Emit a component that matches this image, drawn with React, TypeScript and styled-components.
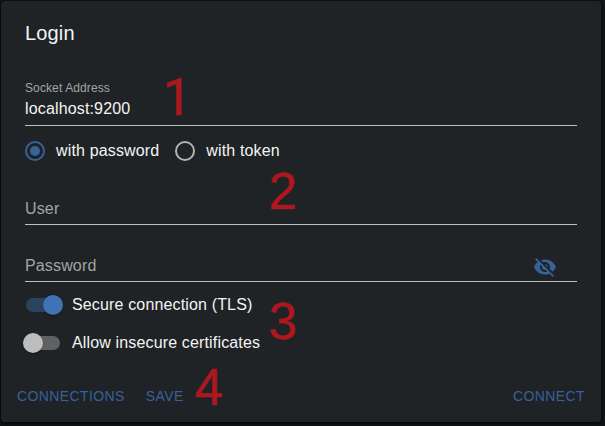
import React from "react";
import styled, { createGlobalStyle } from "styled-components";

const GlobalStyle = createGlobalStyle`
  *, *::before, *::after { box-sizing: border-box; }
  body {
    margin: 0;
    background: #111314;
    font-family: "Liberation Sans", Arial, sans-serif;
    font-size: 16px;
    overflow: hidden;
  }
`;

const Page = styled.main`
  position: relative;
  width: 605px;
  height: 426px;
  padding: 1px;
`;

const Card = styled.form`
  display: flex;
  flex-direction: column;
  width: 600px;
  height: 421px;
  padding: 16px 24px 8px;
  border-radius: 4px;
  background: #1f2325;
  color: #f4f4f4;
  box-shadow: 0 2px 4px rgba(0, 0, 0, 0.6), 0 0 2px rgba(0, 0, 0, 0.5);
`;

const Title = styled.h1`
  margin: 0 0 32px;
  font-size: 20px;
  font-weight: 400;
  line-height: 32px;
  letter-spacing: 0.15px;
`;

const Field = styled.div<{ $height: number }>`
  display: flex;
  align-items: flex-end;
  height: ${(p) => p.$height}px;
  border-bottom: 1px solid #bcc0c0;
`;

const FieldText = styled.div`
  display: flex;
  flex-direction: column;
  flex: 1;
`;

const SmallLabel = styled.label`
  height: 11px;
  font-size: 12px;
  line-height: 12px;
  letter-spacing: 0.11px;
  color: #a3a5a5;
`;

const Value = styled.span<{ $muted?: boolean }>`
  height: 32px;
  padding-top: ${(p) => (p.$muted ? 7 : 6)}px;
  line-height: 19px;
  letter-spacing: 0.15px;
  color: ${(p) => (p.$muted ? "#a3a5a5" : "#f4f4f4")};
`;

const EyeButton = styled.span`
  display: flex;
  width: 24px;
  height: 24px;
  margin: 0 20px 2px 0;
  color: #386399;
`;

const RadioGroup = styled.div`
  display: flex;
  align-items: center;
  gap: 16px;
  height: 50px;
`;

const Choice = styled.label`
  display: flex;
  align-items: center;
  gap: 11px;
  line-height: 20px;
  letter-spacing: 0.15px;
`;

const Radio = styled.span<{ $on?: boolean }>`
  display: flex;
  align-items: center;
  justify-content: center;
  width: 20px;
  height: 20px;
  border: 2px solid ${(p) => (p.$on ? "#386399" : "#b2b3b4")};
  border-radius: 50%;
  &::after {
    content: "";
    width: 10px;
    height: 10px;
    border-radius: 50%;
    background: ${(p) => (p.$on ? "#386399" : "transparent")};
  }
`;

const Switches = styled.div`
  padding-top: 4px;
`;

const SwitchRow = styled.label`
  display: flex;
  align-items: center;
  gap: 12px;
  height: 38px;
  line-height: 20px;
  letter-spacing: 0.15px;
`;

const Track = styled.span<{ $on?: boolean }>`
  display: flex;
  align-items: center;
  justify-content: ${(p) => (p.$on ? "flex-end" : "flex-start")};
  width: 34px;
  height: 14px;
  margin-left: 1px;
  border-radius: 7px;
  background: ${(p) => (p.$on ? "#2b435f" : "#5e6263")};
`;

const Thumb = styled.span<{ $on?: boolean }>`
  flex: none;
  width: 20px;
  height: 20px;
  margin: 0 -3px;
  border-radius: 50%;
  background: ${(p) => (p.$on ? "#4172b3" : "#bdbdbd")};
  box-shadow: 0 2px 1px -1px rgba(0, 0, 0, 0.2), 0 1px 1px rgba(0, 0, 0, 0.14),
    0 1px 3px rgba(0, 0, 0, 0.12);
`;

const Actions = styled.footer`
  display: flex;
  gap: 5px;
  margin: auto -16px 0;
`;

const TextButton = styled.button<{ $end?: boolean }>`
  height: 36px;
  margin-left: ${(p) => (p.$end ? "auto" : "0")};
  padding: 0 8px;
  border: 0;
  background: none;
  color: #36619c;
  font: 14px "Liberation Sans", Arial, sans-serif;
  letter-spacing: 0.4px;
`;

const Marker = styled.span<{ $x: number; $y: number; $font?: string }>`
  position: absolute;
  left: ${(p) => p.$x}px;
  top: ${(p) => p.$y}px;
  color: #ad1820;
  font-family: ${(p) => p.$font ?? '"Liberation Sans"'}, sans-serif;
  font-size: 51px;
  line-height: 52px;
  -webkit-text-stroke: 0.6px #ad1820;
  pointer-events: none;
`;

const markers = [
  { label: "1", x: 163, y: 72, font: "Roboto" },
  { label: "2", x: 269, y: 166 },
  { label: "3", x: 269, y: 296 },
  { label: "4", x: 195, y: 362 },
];

function VisibilityOff() {
  return (
    <svg width="24" height="24" viewBox="0 0 24 24" fill="currentColor">
      <path d="M12 7c2.76 0 5 2.24 5 5 0 .65-.13 1.26-.36 1.83l2.92 2.92c1.51-1.26 2.7-2.89 3.43-4.75-1.73-4.39-6-7.5-11-7.5-1.4 0-2.74.25-3.98.7l2.16 2.16C10.74 7.13 11.35 7 12 7zM2 4.27l2.28 2.28.46.46C3.08 8.3 1.78 10.02 1 12c1.73 4.39 6 7.5 11 7.5 1.55 0 3.03-.3 4.38-.84l.42.42L19.73 22 21 20.73 3.27 3 2 4.27zM7.53 9.8l1.55 1.55c-.05.21-.08.43-.08.65 0 1.66 1.34 3 3 3 .22 0 .44-.03.65-.08l1.55 1.55c-.67.33-1.41.53-2.2.53-2.76 0-5-2.24-5-5 0-.79.2-1.53.53-2.2zm4.31-.78l3.15 3.15.02-.16c0-1.66-1.34-3-3-3l-.17.01z" />
    </svg>
  );
}

export default function App() {
  return (
    <Page>
      <GlobalStyle />
      <Card>
        <Title>Login</Title>
        <Field $height={45}>
          <FieldText>
            <SmallLabel>Socket Address</SmallLabel>
            <Value>localhost:9200</Value>
          </FieldText>
        </Field>
        <RadioGroup>
          <Choice>
            <Radio $on />
            with password
          </Choice>
          <Choice>
            <Radio />
            with token
          </Choice>
        </RadioGroup>
        <Field $height={49}>
          <Value $muted>User</Value>
        </Field>
        <Field $height={57}>
          <FieldText>
            <Value $muted>Password</Value>
          </FieldText>
          <EyeButton>
            <VisibilityOff />
          </EyeButton>
        </Field>
        <Switches>
          <SwitchRow>
            <Track $on>
              <Thumb $on />
            </Track>
            Secure connection (TLS)
          </SwitchRow>
          <SwitchRow>
            <Track>
              <Thumb />
            </Track>
            Allow insecure certificates
          </SwitchRow>
        </Switches>
        <Actions>
          <TextButton type="button">CONNECTIONS</TextButton>
          <TextButton type="button">SAVE</TextButton>
          <TextButton type="button" $end>
            CONNECT
          </TextButton>
        </Actions>
      </Card>
      {markers.map((m) => (
        <Marker key={m.label} $x={m.x} $y={m.y} $font={m.font}>
          {m.label}
        </Marker>
      ))}
    </Page>
  );
}
